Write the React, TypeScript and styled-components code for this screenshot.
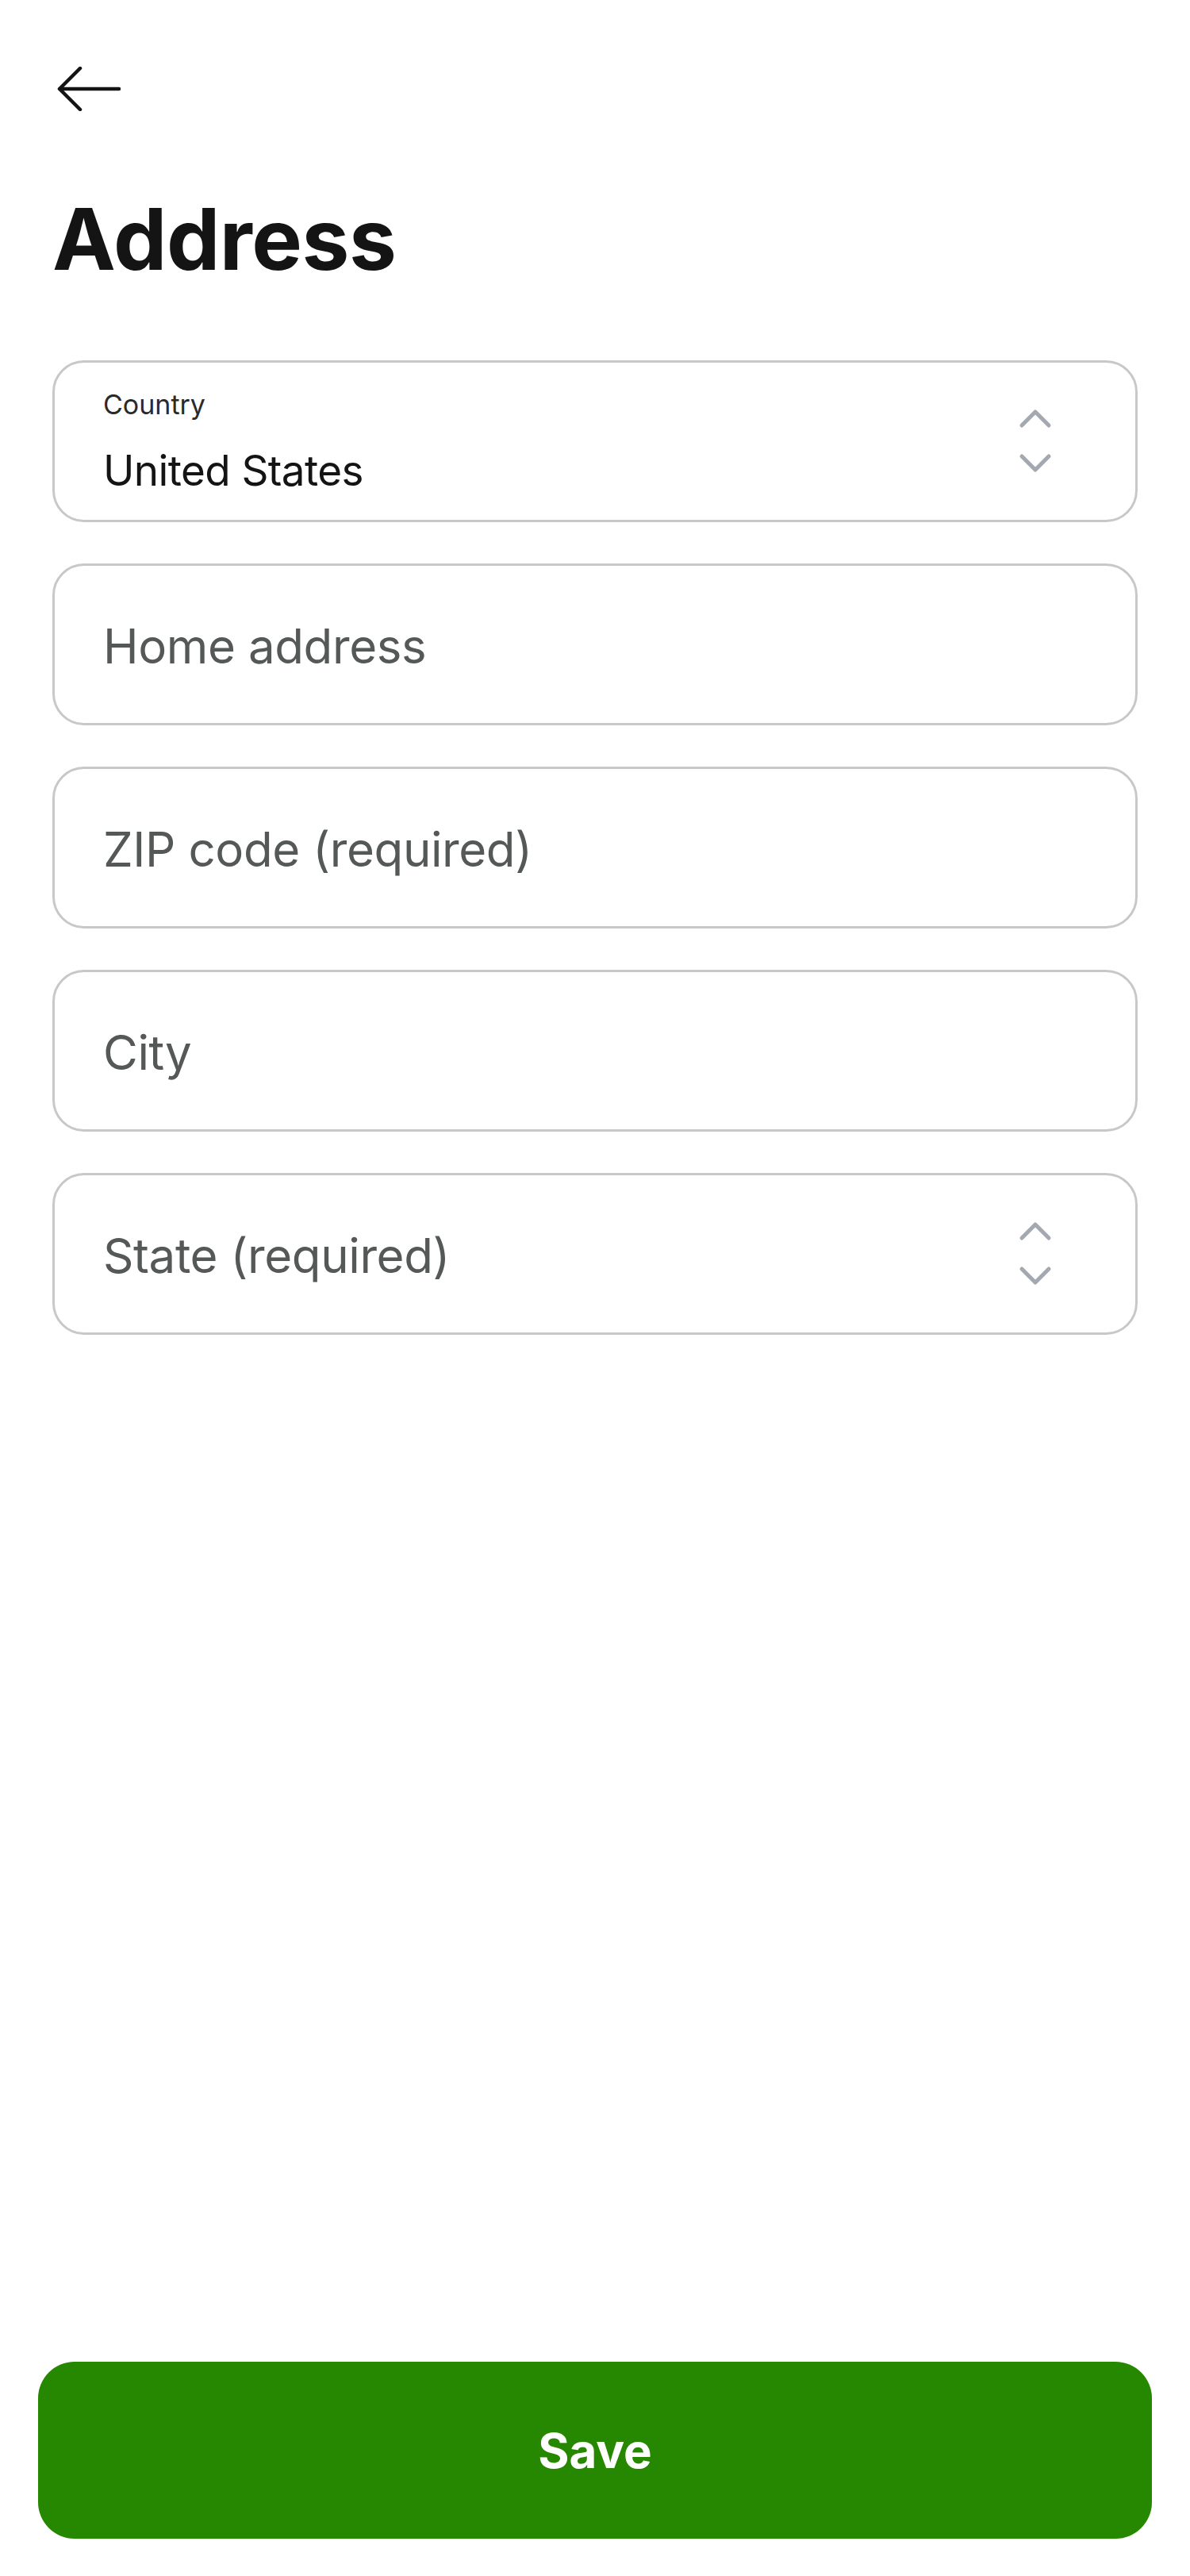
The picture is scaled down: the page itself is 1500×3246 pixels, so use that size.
import React from "react";
import styled, { createGlobalStyle } from "styled-components";

const TEXT_COLOR = "#141414";
const BORDER_COLOR = "#c8c8c8";
const PLACEHOLDER_COLOR = "#545856";
const CHEVRON_COLOR = "#a4a8b0";
const BRAND_GREEN = "#268700";

const GlobalStyle = createGlobalStyle`
	* {
		box-sizing: border-box;
	}
	html, body {
		margin: 0;
		padding: 0;
		background: #ffffff;
		font-family: Inter, "Noto Sans", "Liberation Sans", sans-serif;
		color: ${TEXT_COLOR};
	}
`;

const Page = styled.div`
	min-height: 100vh;
	display: flex;
	flex-direction: column;
	padding: 84px 66px 47px;
`;

const BackButton = styled.button`
	width: 80px;
	height: 56px;
	margin-left: 6px;
	padding: 0;
	border: none;
	background: none;
	cursor: pointer;
	display: flex;
	align-items: center;
	color: ${TEXT_COLOR};
`;

const Title = styled.h1`
	margin: 108px 0 0;
	font-size: 107px;
	line-height: 107px;
	font-weight: 700;
	letter-spacing: -0.5px;
	color: ${TEXT_COLOR};
`;

const Fields = styled.div`
	margin-top: 99px;
	display: flex;
	flex-direction: column;
	gap: 52px;
`;

const Field = styled.div`
	height: 204px;
	border: 3px solid ${BORDER_COLOR};
	border-radius: 40px;
	display: flex;
	align-items: center;
	padding: 0 104px 0 61px;
`;

const FieldBody = styled.div`
	flex: 1;
	display: flex;
	flex-direction: column;
	justify-content: center;
`;

const SmallLabel = styled.div`
	font-size: 34px;
	line-height: 40px;
	color: #2a2a2a;
`;

const Value = styled.div`
	margin-top: 33px;
	font-size: 53px;
	line-height: 60px;
	letter-spacing: -0.6px;
	color: ${TEXT_COLOR};
`;

const Placeholder = styled.div`
	padding-top: 4px;
	font-size: 60px;
	line-height: 60px;
	letter-spacing: -0.4px;
	color: ${PLACEHOLDER_COLOR};
`;

const Chevrons = styled.svg`
	flex: none;
	width: 44px;
	height: 84px;
	color: ${CHEVRON_COLOR};
`;

const SaveButton = styled.button`
	margin: auto -18px 0;
	height: 223px;
	border: none;
	border-radius: 46px;
	background: ${BRAND_GREEN};
	color: #ffffff;
	font-family: Inter, "Noto Sans", "Liberation Sans", sans-serif;
	font-size: 60px;
	font-weight: 700;
	cursor: pointer;
`;

function ArrowLeft() {
	return (
		<svg width="80" height="56" viewBox="0 0 80 56" fill="none">
			<path
				d="M78 28H3M29 2L3 28l26 26"
				stroke="currentColor"
				strokeWidth="4.5"
				strokeLinecap="round"
				strokeLinejoin="round"
			/>
		</svg>
	);
}

function SelectChevrons() {
	return (
		<Chevrons viewBox="0 0 44 84" fill="none">
			<path
				d="M5 22L22 5l17 17M5 61l17 17 17-17"
				stroke="currentColor"
				strokeWidth="5"
				strokeLinecap="round"
				strokeLinejoin="round"
			/>
		</Chevrons>
	);
}

interface IFieldProps {
	label: string;
	value?: string;
	select?: boolean;
}

function FormField(props: IFieldProps) {
	return (
		<Field>
			<FieldBody>
				{props.value ? (
					<>
						<SmallLabel>{props.label}</SmallLabel>
						<Value>{props.value}</Value>
					</>
				) : (
					<Placeholder>{props.label}</Placeholder>
				)}
			</FieldBody>
			{props.select ? <SelectChevrons /> : null}
		</Field>
	);
}

export default function App() {
	return (
		<>
			<GlobalStyle />
			<Page>
				<BackButton aria-label="Back">
					<ArrowLeft />
				</BackButton>

				<Title>Address</Title>

				<Fields>
					<FormField label="Country" value="United States" select />
					<FormField label="Home address" />
					<FormField label="ZIP code (required)" />
					<FormField label="City" />
					<FormField label="State (required)" select />
				</Fields>

				<SaveButton>Save</SaveButton>
			</Page>
		</>
	);
}
